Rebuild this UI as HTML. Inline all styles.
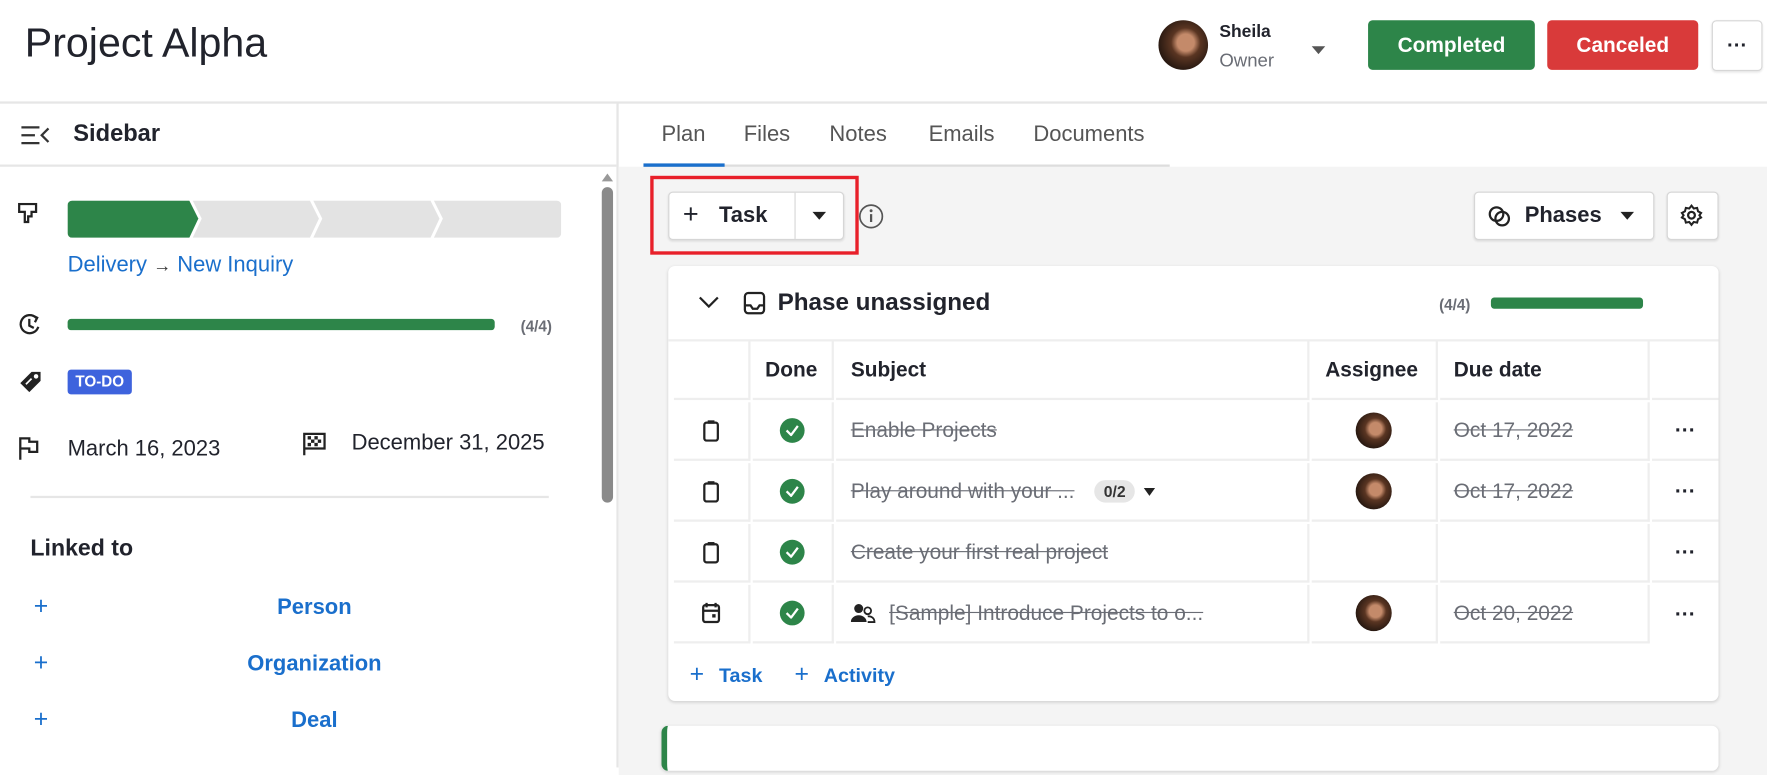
<!DOCTYPE html>
<html><head><meta charset="utf-8"><style>
*{box-sizing:border-box;margin:0;padding:0}
html,body{width:1767px;height:750px;overflow:hidden;background:#fff;font-family:"Liberation Sans",sans-serif;color:#21232c}
#w{position:absolute;left:0;top:0;width:1568px;height:680px;transform:scale(1.12691);transform-origin:0 0}
.a{position:absolute}
.av{border-radius:50%;background:radial-gradient(circle at 55% 45%,#c48a6a 0 22%,#5a3522 38%,#2a1a12 70%)}
.btn{position:absolute;border-radius:4px;color:#fff;font-weight:bold;font-size:18.5px;display:flex;align-items:center;justify-content:center}
.wb{position:absolute;background:#fff;border:1px solid #d6d6d6;border-radius:4px;box-shadow:0 1px 2px rgba(0,0,0,.1)}
.blue{color:#1a6fcc}
.c{position:absolute;border-right:2px solid #eee;border-bottom:2px solid #eee;display:flex;align-items:center;font-size:18.5px}
.s{text-decoration:line-through;color:#6a6d75}
.chk{width:22px;height:22px;border-radius:50%;background:#2d8549;margin:auto;display:flex;align-items:center;justify-content:center}
.tab{position:absolute;top:108px;font-size:19.5px;color:#555}
</style></head><body><div id="w">
<div class="a" style="left:22px;top:17px;font-size:36.5px;color:#21232c">Project Alpha</div>
<div class="a av" style="left:1028px;top:18px;width:44px;height:44px"></div>
<div class="a" style="left:1082px;top:20px;font-size:15.5px;font-weight:bold">Sheila</div>
<div class="a" style="left:1082px;top:45px;font-size:16.5px;color:#6a6d75">Owner</div>
<div class="a" style="left:1164px;top:41px;border-left:6px solid transparent;border-right:6px solid transparent;border-top:7px solid #555"></div>
<div class="btn" style="left:1214px;top:18px;width:148px;height:44px;background:#2d8549">Completed</div>
<div class="btn" style="left:1373px;top:18px;width:134px;height:44px;background:#d93a3a">Canceled</div>
<div class="wb" style="left:1519px;top:18px;width:45px;height:45px;text-align:center;font-weight:bold;font-size:18px;line-height:42px">···</div>
<div class="a" style="left:0;top:90px;width:1568px;height:2px;background:#e6e6e6"></div>
<svg class="a" style="left:18px;top:110px" width="28" height="20" viewBox="0 0 28 20"><path d="M1 3h16M1 10h12M1 17h16M25 4l-6 6 6 6" stroke="#333" stroke-width="2" fill="none"/></svg>
<div class="a" style="left:65px;top:107px;font-size:21px;font-weight:bold">Sidebar</div>
<div class="a" style="left:547px;top:91px;width:2px;height:590px;background:#e6e6e6"></div>
<div class="a" style="left:0;top:146px;width:547px;height:2px;background:#e6e6e6"></div>
<div class="a" style="left:534px;top:154px;border-left:5px solid transparent;border-right:5px solid transparent;border-bottom:7px solid #999"></div>
<div class="a" style="left:534px;top:166px;width:10px;height:280px;border-radius:5px;background:#8a8a8a"></div>
<svg class="a" style="left:16px;top:180px" width="18" height="20"><path d="M1 1h15v7h-4v4h-3v5H6V8H1z" fill="none" stroke="#222" stroke-width="2"/></svg>
<svg class="a" style="left:60px;top:178px" width="438" height="33"><path d="M4 0h104l8 16-8 17H4a4 4 0 0 1-4-4V4a4 4 0 0 1 4-4z" fill="#2d8549"/><path d="M111 0h104l8 16-8 17H111l8-17z" fill="#e3e3e3"/><path d="M218 0h104l8 16-8 17H218l8-17z" fill="#e3e3e3"/><path d="M325 0h109a4 4 0 0 1 4 4v25a4 4 0 0 1-4 4H325l8-17z" fill="#e3e3e3"/></svg>
<div class="a blue" style="left:60px;top:224px;font-size:19.5px">Delivery <span style="color:#333;font-size:16px">→</span> New Inquiry</div>
<svg class="a" style="left:15px;top:277px" width="22" height="22"><path d="M17 5A8 8 0 1 0 19 13M11 6v6l4 2M14 3l4 2-2 4" fill="none" stroke="#222" stroke-width="2"/></svg>
<div class="a" style="left:60px;top:283px;width:379px;height:10px;border-radius:3px;background:#2d8549"></div>
<div class="a" style="left:462px;top:282px;font-size:13.5px;font-weight:bold;color:#6a6d75">(4/4)</div>
<svg class="a" style="left:16px;top:328px" width="22" height="22"><path d="M12 2h8v8L10 20 2 12z" fill="#222"/><circle cx="16" cy="6" r="2" fill="#fff"/><path d="M7 13l5-5" stroke="#fff" stroke-width="1.5"/></svg>
<div class="a" style="left:60px;top:328px;width:57px;height:22px;border-radius:3px;background:#3e63dd;color:#fff;font-weight:bold;font-size:13.5px;text-align:center;line-height:22px">TO-DO</div>
<svg class="a" style="left:16px;top:387px" width="22" height="22"><path d="M2 21V2h8v3h7v9h-7v-3H2" fill="none" stroke="#222" stroke-width="2"/></svg>
<div class="a" style="left:60px;top:387px;font-size:19.5px">March 16, 2023</div>
<svg class="a" style="left:268px;top:383px" width="22" height="22"><path d="M2 21V2h18v13H3" fill="none" stroke="#222" stroke-width="2"/><path d="M5 4h3v3H5zM11 4h3v3h-3zM8 7h3v3H8zM14 7h3v3h-3zM5 10h3v3H5zM11 10h3v3h-3z" fill="#222"/></svg>
<div class="a" style="left:312px;top:382px;font-size:19.5px">December 31, 2025</div>
<div class="a" style="left:27px;top:440px;width:460px;height:2px;background:#e6e6e6"></div>
<div class="a" style="left:27px;top:475px;font-size:20.5px;font-weight:bold">Linked to</div>
<div class="a blue" style="left:30px;top:525px;font-size:22px">+</div><div class="a blue" style="left:60px;width:438px;text-align:center;top:528px;font-size:19.5px;font-weight:bold">Person</div>
<div class="a blue" style="left:30px;top:575px;font-size:22px">+</div><div class="a blue" style="left:60px;width:438px;text-align:center;top:578px;font-size:19.5px;font-weight:bold">Organization</div>
<div class="a blue" style="left:30px;top:625px;font-size:22px">+</div><div class="a blue" style="left:60px;width:438px;text-align:center;top:628px;font-size:19.5px;font-weight:bold">Deal</div>
<div class="a" style="left:549px;top:148px;width:1019px;height:540px;background:#f4f4f4"></div>
<div class="tab blue" style="left:587px">Plan</div>
<div class="tab" style="left:660px">Files</div>
<div class="tab" style="left:736px">Notes</div>
<div class="tab" style="left:824px">Emails</div>
<div class="tab" style="left:917px">Documents</div>
<div class="a" style="left:571px;top:146px;width:467px;height:2px;background:#ddd"></div>
<div class="a" style="left:571px;top:145px;width:72px;height:3px;background:#1a6fcc"></div>
<div class="a" style="left:577px;top:156px;width:185px;height:70px;border:3px solid #e8202a"></div>
<div class="wb" style="left:593px;top:170px;width:156px;height:43px"></div>
<div class="a" style="left:705px;top:171px;width:1px;height:41px;background:#d6d6d6"></div>
<div class="a" style="left:606px;top:177px;font-size:24px">+</div>
<div class="a" style="left:638px;top:180px;font-size:19.5px;font-weight:bold">Task</div>
<div class="a" style="left:721px;top:188px;border-left:6px solid transparent;border-right:6px solid transparent;border-top:7px solid #222"></div>
<svg class="a" style="left:761px;top:180px" width="24" height="24"><circle cx="12" cy="12" r="10" fill="none" stroke="#555" stroke-width="1.5"/><path d="M12 10v7" stroke="#555" stroke-width="2"/><circle cx="12" cy="7" r="1.3" fill="#555"/></svg>
<div class="wb" style="left:1308px;top:170px;width:160px;height:43px"></div>
<svg class="a" style="left:1320px;top:181px" width="22" height="22"><circle cx="8" cy="9" r="6" fill="none" stroke="#222" stroke-width="2"/><circle cx="13" cy="13" r="6" fill="none" stroke="#222" stroke-width="2"/></svg>
<div class="a" style="left:1353px;top:180px;font-size:19.5px;font-weight:bold">Phases</div>
<div class="a" style="left:1438px;top:188px;border-left:6px solid transparent;border-right:6px solid transparent;border-top:7px solid #222"></div>
<div class="wb" style="left:1479px;top:170px;width:46px;height:43px"></div>
<svg class="a" style="left:1491px;top:181px" width="20" height="20"><circle cx="10" cy="10" r="3" fill="none" stroke="#222" stroke-width="2"/><path d="M10 1.5l2 2.5 3-.5.8 3 2.7 1.5-1.5 2 1.5 2-2.7 1.5-.8 3-3-.5-2 2.5-2-2.5-3 .5-.8-3L1.5 12l1.5-2-1.5-2 2.7-1.5.8-3 3 .5z" fill="none" stroke="#222" stroke-width="1.8"/></svg>
<div class="a" style="left:593px;top:236px;width:932px;height:386px;background:#fff;border-radius:6px;box-shadow:0 1px 3px rgba(0,0,0,.15)"></div>
<svg class="a" style="left:619px;top:261px" width="20" height="14"><path d="M2 3l8 8 8-8" fill="none" stroke="#222" stroke-width="2"/></svg>
<svg class="a" style="left:659px;top:258px" width="22" height="22"><rect x="2" y="2" width="17" height="18" rx="3" fill="none" stroke="#222" stroke-width="2"/><path d="M2 13h5l2 3h4l2-3h4" fill="none" stroke="#222" stroke-width="2"/></svg>
<div class="a" style="left:690px;top:256px;font-size:21.5px;font-weight:bold">Phase unassigned</div>
<div class="a" style="left:1277px;top:263px;font-size:13.5px;font-weight:bold;color:#6a6d75">(4/4)</div>
<div class="a" style="left:1323px;top:264px;width:135px;height:10px;border-radius:3px;background:#2d8549"></div>
<div class="a" style="left:593px;top:301px;width:932px;height:2px;background:#eee"></div>
<div class="c" style="left:598px;top:303px;width:68px;height:52px"></div>
<div class="c" style="left:668px;top:303px;width:72px;height:52px;font-weight:bold;padding-left:11px">Done</div>
<div class="c" style="left:742px;top:303px;width:420px;height:52px;font-weight:bold;padding-left:13px">Subject</div>
<div class="c" style="left:1164px;top:303px;width:112px;height:52px;font-weight:bold;padding-left:12px">Assignee</div>
<div class="c" style="left:1278px;top:303px;width:186px;height:52px;font-weight:bold;padding-left:12px">Due date</div>
<div class="c" style="left:1466px;top:303px;width:59px;height:52px;border-right:0"></div>
<div class="c" style="left:598px;top:357px;width:68px;height:52px;justify-content:center"><svg width="16" height="20"><rect x="2" y="3" width="12" height="16" rx="2" fill="none" stroke="#222" stroke-width="2"/><rect x="5" y="1" width="6" height="3" fill="#222"/></svg></div>
<div class="c" style="left:668px;top:357px;width:72px;height:52px"><div class="chk"><svg width="12" height="10"><path d="M1 5l4 4 6-8" fill="none" stroke="#fff" stroke-width="2"/></svg></div></div>
<div class="c" style="left:742px;top:357px;width:420px;height:52px;padding-left:13px"><span class="s">Enable Projects</span></div>
<div class="c" style="left:1164px;top:357px;width:112px;height:52px;justify-content:center"><div class="av" style="width:32px;height:32px"></div></div>
<div class="c" style="left:1278px;top:357px;width:186px;height:52px;padding-left:12px"><span class="s">Oct 17, 2022</span></div>
<div class="c" style="left:1466px;top:357px;width:59px;height:52px;border-right:0;justify-content:center;font-weight:bold">···</div>
<div class="c" style="left:598px;top:411px;width:68px;height:52px;justify-content:center"><svg width="16" height="20"><rect x="2" y="3" width="12" height="16" rx="2" fill="none" stroke="#222" stroke-width="2"/><rect x="5" y="1" width="6" height="3" fill="#222"/></svg></div>
<div class="c" style="left:668px;top:411px;width:72px;height:52px"><div class="chk"><svg width="12" height="10"><path d="M1 5l4 4 6-8" fill="none" stroke="#fff" stroke-width="2"/></svg></div></div>
<div class="c" style="left:742px;top:411px;width:420px;height:52px;padding-left:13px"><span class="s">Play around with your ...</span><span style="margin-left:18px;background:#e6e6e6;border-radius:10px;padding:2px 8px;font-size:14px;font-weight:bold;color:#333">0/2</span><span style="margin-left:8px;border-left:5px solid transparent;border-right:5px solid transparent;border-top:7px solid #222;width:0;height:0"></span></div>
<div class="c" style="left:1164px;top:411px;width:112px;height:52px;justify-content:center"><div class="av" style="width:32px;height:32px"></div></div>
<div class="c" style="left:1278px;top:411px;width:186px;height:52px;padding-left:12px"><span class="s">Oct 17, 2022</span></div>
<div class="c" style="left:1466px;top:411px;width:59px;height:52px;border-right:0;justify-content:center;font-weight:bold">···</div>
<div class="c" style="left:598px;top:465px;width:68px;height:52px;justify-content:center"><svg width="16" height="20"><rect x="2" y="3" width="12" height="16" rx="2" fill="none" stroke="#222" stroke-width="2"/><rect x="5" y="1" width="6" height="3" fill="#222"/></svg></div>
<div class="c" style="left:668px;top:465px;width:72px;height:52px"><div class="chk"><svg width="12" height="10"><path d="M1 5l4 4 6-8" fill="none" stroke="#fff" stroke-width="2"/></svg></div></div>
<div class="c" style="left:742px;top:465px;width:420px;height:52px;padding-left:13px"><span class="s">Create your first real project</span></div>
<div class="c" style="left:1164px;top:465px;width:112px;height:52px"></div>
<div class="c" style="left:1278px;top:465px;width:186px;height:52px"></div>
<div class="c" style="left:1466px;top:465px;width:59px;height:52px;border-right:0;justify-content:center;font-weight:bold">···</div>
<div class="c" style="left:598px;top:519px;width:68px;height:52px;justify-content:center"><svg width="18" height="20"><rect x="2" y="3" width="14" height="15" rx="2" fill="none" stroke="#222" stroke-width="2"/><path d="M5 1v4M13 1v4M2 8h14" stroke="#222" stroke-width="2"/><rect x="10" y="11" width="3" height="3" fill="#222"/></svg></div>
<div class="c" style="left:668px;top:519px;width:72px;height:52px"><div class="chk"><svg width="12" height="10"><path d="M1 5l4 4 6-8" fill="none" stroke="#fff" stroke-width="2"/></svg></div></div>
<div class="c" style="left:742px;top:519px;width:420px;height:52px;padding-left:13px"><svg width="22" height="18" style="margin-right:12px"><circle cx="7" cy="5" r="4" fill="#222"/><path d="M0 17a7 6 0 0 1 14 0z" fill="#222"/><circle cx="15" cy="7" r="3" fill="none" stroke="#222" stroke-width="1.6"/><path d="M15 17h6a5 5 0 0 0-6-5" fill="none" stroke="#222" stroke-width="1.6"/></svg><span class="s">[Sample] Introduce Projects to o...</span></div>
<div class="c" style="left:1164px;top:519px;width:112px;height:52px;justify-content:center"><div class="av" style="width:32px;height:32px"></div></div>
<div class="c" style="left:1278px;top:519px;width:186px;height:52px;padding-left:12px"><span class="s">Oct 20, 2022</span></div>
<div class="c" style="left:1466px;top:519px;width:59px;height:52px;border-right:0;border-bottom:0;justify-content:center;font-weight:bold">···</div>
<div class="a blue" style="left:612px;top:585px;font-size:22px">+</div><div class="a blue" style="left:638px;top:589px;font-size:17.5px;font-weight:bold">Task</div>
<div class="a blue" style="left:705px;top:585px;font-size:22px">+</div><div class="a blue" style="left:731px;top:589px;font-size:17.5px;font-weight:bold">Activity</div>
<div class="a" style="left:587px;top:644px;width:938px;height:40px;background:#fff;border-radius:6px;border-left:5px solid #2d8549;box-shadow:0 1px 3px rgba(0,0,0,.15)"></div>
</div></body></html>
